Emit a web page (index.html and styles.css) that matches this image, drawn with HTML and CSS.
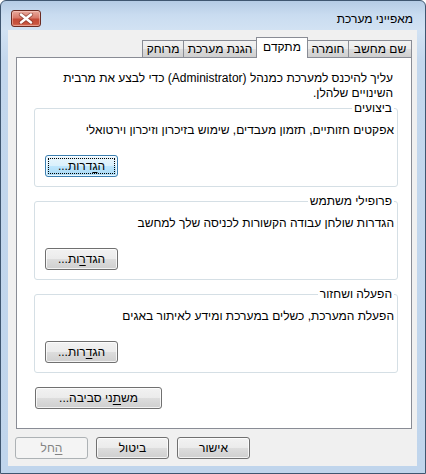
FILE: index.html
```html
<!DOCTYPE html>
<html lang="he" dir="rtl">
<head>
<meta charset="utf-8">
<title>מאפייני מערכת</title>
<link rel="stylesheet" href="styles.css">
</head>
<body>
<div class="window">
  <div class="titlebar">
    <span class="title">מאפייני מערכת</span>
    <button class="close" aria-label="סגור">
      <svg width="16" height="11" viewBox="0 0 16 11">
        <path d="M3 1.5 L13 9.5 M13 1.5 L3 9.5" stroke="#6e2a20" stroke-width="4.2" stroke-linecap="round" fill="none" opacity="0.55"/>
        <path d="M3 1.5 L13 9.5 M13 1.5 L3 9.5" stroke="#ffffff" stroke-width="2.4" stroke-linecap="round" fill="none"/>
      </svg>
    </button>
  </div>
  <div class="client">
    <div class="tabs">
      <div class="tab tab-name">שם מחשב</div>
      <div class="tab tab-hw">חומרה</div>
      <div class="tab tab-adv active">מתקדם</div>
      <div class="tab tab-prot">הגנת מערכת</div>
      <div class="tab tab-remote">מרוחק</div>
    </div>
    <div class="panel">
      <p class="intro">עליך להיכנס למערכת כמנהל (Administrator) כדי לבצע את מרבית השינויים שלהלן.</p>
      <fieldset class="group">
        <legend>ביצועים</legend>
        <div class="desc">אפקטים חזותיים, תזמון מעבדים, שימוש בזיכרון וזיכרון וירטואלי</div>
        <button class="btn focus">ה<u>ג</u>דרות...</button>
      </fieldset>
      <fieldset class="group">
        <legend>פרופילי משתמש</legend>
        <div class="desc">הגדרות שולחן עבודה הקשורות לכניסה שלך למחשב</div>
        <button class="btn">הגד<u>ר</u>ות...</button>
      </fieldset>
      <fieldset class="group">
        <legend>הפעלה ושחזור</legend>
        <div class="desc">הפעלת המערכת, כשלים במערכת ומידע לאיתור באגים</div>
        <button class="btn">הג<u>ד</u>רות...</button>
      </fieldset>
      <button class="btn env">מש<u>ת</u>ני סביבה...</button>
    </div>
    <div class="footer">
      <button class="btn">אישור</button>
      <button class="btn">ביטול</button>
      <button class="btn" disabled><u>ה</u>חל</button>
    </div>
  </div>
</div>
</body>
</html>
```
FILE: styles.css
```css
* { box-sizing: border-box; }
html, body { margin: 0; padding: 0; }
body {
  width: 426px;
  height: 474px;
  font-family: "Liberation Sans", "DejaVu Sans", sans-serif;
  font-size: 12px;
  color: #000;
  background: #fff;
}
.window {
  width: 426px;
  height: 474px;
  border: 1px solid #3f5670;
  border-radius: 6px 6px 0 0;
  background: linear-gradient(to bottom, #b4cbe4 0px, #c9dcf0 14px, #d2e2f3 29px, #c3d7ed 60px, #c0d5ec 100%);
  padding: 0 8px 7px 7px;
  display: flex;
  flex-direction: column;
}
.titlebar {
  height: 29px;
  flex: none;
  display: flex;
  justify-content: space-between;
  align-items: flex-start;
}
.title {
  margin: 11px 4px 0 0;
  font-size: 12px;
  line-height: 15px;
  color: #000;
}
.close {
  width: 30px;
  height: 17px;
  margin: 9px 0 0 3px;
  padding: 0;
  border: 1px solid #6b2b22;
  border-radius: 3px;
  background: linear-gradient(to bottom, #e9aa9d 0%, #d87a6a 45%, #c44a37 55%, #c9553f 85%, #d77661 100%);
  box-shadow: inset 0 0 0 1px rgba(255, 220, 210, 0.45);
  display: flex;
  align-items: center;
  justify-content: center;
}
.close svg { display: block; }
.client {
  flex: 1;
  background: #f0f0f0;
  display: flex;
  flex-direction: column;
}
.tabs {
  position: relative;
  z-index: 1;
  display: flex;
  align-items: flex-start;
  height: 21px;
  margin: 7px 5px 0 8px;
}
.tab {
  height: 17px;
  margin-top: 3px;
  margin-left: -1px;
  padding: 0;
  border: 1px solid #898c95;
  border-bottom: none;
  background: linear-gradient(to bottom, #f2f2f2 0%, #ebebeb 50%, #dddddd 50%, #cfcfcf 100%);
  line-height: 16px;
  text-align: center;
  white-space: nowrap;
}
.tab-name { width: 64px; }
.tab-hw { width: 42px; }
.tab-adv { width: 52px; }
.tab-prot { width: 74px; }
.tab-remote { width: 42px; }
.tab.active {
  height: 21px;
  margin-top: 0;
  background: #fff;
  position: relative;
  z-index: 2;
  line-height: 19px;
}
.panel {
  height: 372px;
  margin: -1px 5px 0 8px;
  border: 1px solid #898c95;
  background: #fff;
  display: flex;
  flex-direction: column;
}
.intro {
  margin: 13px 18px 0 14px;
  line-height: 15px;
}
.group {
  margin: 0 13px 0 17px;
  padding: 7px 3px 9px 10px;
  border: 1px solid #d5dfe5;
  border-radius: 3px;
  display: flex;
  flex-direction: column;
  align-items: flex-end;
  min-width: 0;
}
.group + .group { margin-top: 7px; }
.group legend {
  padding: 0 2px;
  line-height: 15px;
}
.desc {
  align-self: stretch;
  line-height: 15px;
}
.group .btn { margin-top: 17px; }
.btn {
  width: 73px;
  height: 22px;
  padding: 0;
  border: 1px solid #707070;
  border-radius: 3px;
  background: linear-gradient(to bottom, #f2f2f2 0%, #ebebeb 50%, #dddddd 50%, #cfcfcf 100%);
  box-shadow: inset 0 0 0 1px rgba(255, 255, 255, 0.75);
  font: inherit;
  color: #000;
  line-height: 18px;
}
.btn u { text-underline-offset: 2px; }
.btn.focus {
  border-color: #3c7fb1;
  background: linear-gradient(to bottom, #eaf6fd 0%, #d9f0fc 50%, #bee6fd 50%, #a7d9f5 100%);
  outline: 1px dotted #000;
  outline-offset: -4px;
}
.btn:disabled {
  border-color: #adb2b5;
  background: #f4f4f4;
  box-shadow: none;
  color: #838383;
}
.env {
  width: 127px;
  margin: 14px 0 0 18px;
  align-self: flex-end;
}
.footer {
  display: flex;
  justify-content: flex-end;
  gap: 8px;
  padding: 8px 0 0 7px;
}
```
